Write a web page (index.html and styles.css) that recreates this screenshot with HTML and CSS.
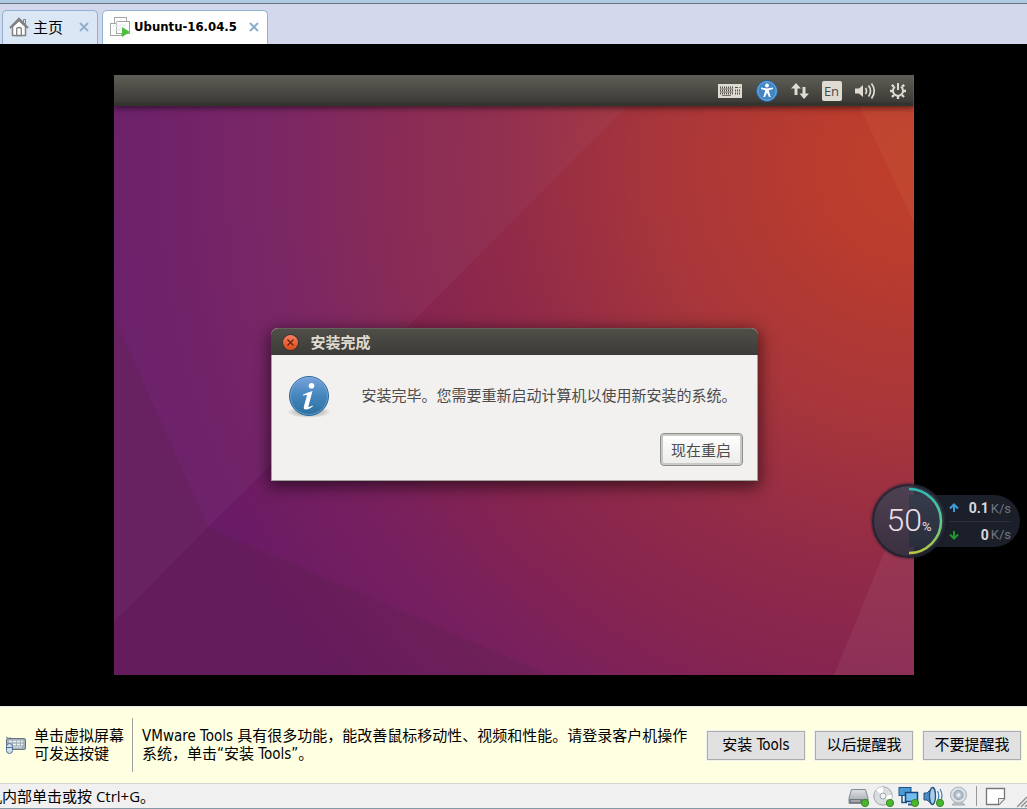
FILE: index.html
```html
<!DOCTYPE html>
<html lang="zh-CN">
<head>
<meta charset="utf-8">
<title>Ubuntu-16.04.5</title>
<link rel="stylesheet" href="styles.css">
</head>
<body>
<header class="tabs">
  <div class="tab tab-home">
    <svg class="tab-icon" width="20" height="20" viewBox="0 0 20 20" fill="#fff" stroke="#808080" stroke-width="1.5"><path d="M3.5 9.5V18.5H16.5V9.5L10 3.5Z"/><path d="M1 11L10 1.800L19 11" fill="none" stroke-width="2"/><path d="M14.500 5V2.500H16.500V7" fill="none" stroke-width="1"/><path d="M7.700 18.500V12Q7.700 10.500 10 10.500T12.300 12V18.500Z" stroke-width="1.300"/></svg>
    <span>主页</span>
    <button class="tab-close" type="button" aria-label="关闭主页"><svg width="10" height="10" viewBox="0 0 10 10" stroke="#8fb0cd" stroke-width="2"><path d="M1 1L9 9M9 1L1 9"/></svg></button>
  </div>
  <div class="tab tab-active">
    <svg class="tab-icon" width="22" height="22" viewBox="0 0 22 22"><g fill="#fff" stroke="#a5a5a5"><rect x="5.500" y="1.500" width="12" height="11"/><rect x="1.500" y="7.500" width="11" height="12"/><rect x="7.500" y="5.500" width="13" height="12"/></g><path d="M4 10H10M5.500 14H11M8 4V12M11 9H17M11 9V15" stroke="#e1e7ee" fill="none"/><path d="M13 11V21L21 16Z" fill="#4dbd3c"/></svg>
    <strong>Ubuntu-16.04.5</strong>
    <button class="tab-close" type="button" aria-label="关闭 Ubuntu-16.04.5"><svg width="10" height="10" viewBox="0 0 10 10" stroke="#8fb0cd" stroke-width="2"><path d="M1 1L9 9M9 1L1 9"/></svg></button>
  </div>
</header>

<main class="stage">
  <section class="guest">
    <svg class="wallpaper" viewBox="0 0 800 600" preserveAspectRatio="none" aria-hidden="true">
      <defs>
        <radialGradient id="sky" gradientUnits="userSpaceOnUse" cx="800" cy="90" r="820">
          <stop offset="0" stop-color="#bf3f2a"/>
          <stop offset=".12" stop-color="#b93c2e"/>
          <stop offset=".31" stop-color="#a8363a"/>
          <stop offset=".49" stop-color="#922b48"/>
          <stop offset=".64" stop-color="#852450"/>
          <stop offset=".77" stop-color="#78205e"/>
          <stop offset=".94" stop-color="#6a1b65"/>
          <stop offset="1" stop-color="#681b66"/>
        </radialGradient>
      </defs>
      <rect width="800" height="600" fill="url(#sky)"/>
      <path d="M0 0H544L0 547Z" fill="#c0b0d0" fill-opacity=".05"/>
      <path d="M0 242L94 452L0 547Z" fill="#5c2040" fill-opacity=".22"/>
      <path d="M94 452L434 600H0V547Z" fill="#5c2048" fill-opacity=".3"/>
      <path d="M731 0H800V148Z" fill="#e8a060" fill-opacity=".09"/>
      <path d="M720 600L800 405V600Z" fill="#fff" fill-opacity=".055"/>
    </svg>
    <div class="panel">
      <svg width="26" height="16" viewBox="0 0 26 16"><rect x="1" y="1" width="24" height="14" fill="#dfdbd2"/><path d="M3 4.500H16M3 7.500H16M3 10.500H16M18 7.500H24M18 10.500H24" stroke="#55544e" stroke-width="2" stroke-dasharray="1 1"/><path d="M3 6H16M3 9H16M5 12.500H14" stroke="#77756d"/><path d="M18 4.500H21" stroke="#55544e"/><path d="M22 4.500H24" stroke="#69b055"/></svg>
      <svg width="22" height="22" viewBox="0 0 22 22"><circle cx="11" cy="11" r="10.500" fill="#4386c4" stroke="#246196"/><circle cx="11" cy="11" r="9.300" fill="none" stroke="#77abdb"/><circle cx="11" cy="5.500" r="1.900" fill="#fff"/><path d="M5 7.500L11 8.500L17 7.500V9L12.700 10.300L14.700 17H13L11 12.800L9 17H7.300L9.300 10.300L5 9Z" fill="#fff"/></svg>
      <svg width="18" height="18" viewBox="0 0 18 18" fill="#dfdbd2"><path d="M5 1L10 6.500H6.500V13H3.500V6.500H0Z"/><path d="M13 17L8.500 11.500H11.500V5H14.500V11.500H18Z"/></svg>
      <span class="lang">En</span>
      <svg width="21" height="18" viewBox="0 0 21 18"><path d="M0 6.500H4L8 3V15L4 11.500H0Z" fill="#dfdbd2"/><path d="M10.500 6Q12.500 9 10.500 12M13.500 3.500Q17.500 9 13.500 14.500M16.500 1.500Q22 9 16.500 16.500" fill="none" stroke="#dfdbd2" stroke-width="1.700"/></svg>
      <svg width="18" height="18" viewBox="0 0 18 18" fill="none" stroke="#dfdbd2"><path d="M6 4.800A5 5 0 1 0 12 4.800" stroke-width="2"/><path d="M9 1V8" stroke-width="2"/><path d="M4.700 4.700L2.800 2.800M13.300 4.700L15.200 2.800M4 9H1M14 9H17M5 13L3 15M13 13L15 15M9 14V17" stroke-width="2.400"/></svg>
    </div>
    <div class="desktop">
      <div class="dialog" role="dialog" aria-labelledby="dialog-title">
        <div class="dialog-bar">
          <button class="dialog-close" type="button" aria-label="关闭"><svg width="7" height="7" viewBox="0 0 7 7" stroke="#602510" stroke-width="1.300"><path d="M.5 .5L6.500 6.500M6.500 .5L.5 6.500"/></svg></button>
          <h1 id="dialog-title">安装完成</h1>
        </div>
        <div class="dialog-body">
          <svg class="info" width="44" height="44" viewBox="0 0 44 44">
            <defs><linearGradient id="blue" x1="0" y1="0" x2="0" y2="1"><stop offset="0" stop-color="#79a2dd"/><stop offset=".5" stop-color="#4585bd"/><stop offset="1" stop-color="#2a709e"/></linearGradient><radialGradient id="shade"><stop offset=".6" stop-color="#000" stop-opacity=".18"/><stop offset="1" stop-color="#000" stop-opacity="0"/></radialGradient></defs>
            <ellipse cx="22" cy="37" rx="22" ry="6" fill="url(#shade)"/>
            <circle cx="22" cy="21" r="19.500" fill="url(#blue)" stroke="#28699c"/>
            <circle cx="22" cy="21" r="18.500" fill="none" stroke="#91b8e3" stroke-opacity=".5"/>
            <circle cx="24.500" cy="10.800" r="2.800" fill="#fff"/>
            <path d="M16 19.500Q20 17.500 25.500 16L21.500 31Q21 33 25.500 30.500L25.800 31.500Q22 34.500 19 34.500Q16 34.500 17 31L20 20.500Q20 19.500 16 20.500Z" fill="#fff"/>
          </svg>
          <p>安装完毕。您需要重新启动计算机以使用新安装的系统。</p>
        </div>
        <div class="dialog-actions"><button class="restart" type="button">现在重启</button></div>
      </div>
    </div>
  </section>

  <aside class="meter">
    <div class="gauge">
      <svg class="ring" width="74" height="74" viewBox="0 0 74 74" aria-hidden="true"><defs><linearGradient id="arc" x1="0" y1="0" x2="0" y2="1"><stop offset="0" stop-color="#2dbdb4"/><stop offset=".5" stop-color="#5cc98c"/><stop offset="1" stop-color="#bcc83e"/></linearGradient></defs><path d="M37 5A32 32 0 0 1 37 69" fill="none" stroke="url(#arc)" stroke-width="2.500"/></svg>
      <span class="gauge-value">50</span><span class="gauge-unit">%</span>
    </div>
    <div class="rates">
      <div class="rate"><svg width="10" height="10" viewBox="0 0 10 10" fill="none" stroke="#3a9cdb" stroke-width="2"><path d="M5 9V2M1 5.500L5 1.500L9 5.500"/></svg><b>0.1</b><span>K/s</span></div>
      <div class="rate"><svg width="10" height="10" viewBox="0 0 10 10" fill="none" stroke="#20962e" stroke-width="2"><path d="M5 1V8M1 4.500L5 8.500L9 4.500"/></svg><b>0</b><span>K/s</span></div>
    </div>
  </aside>
</main>

<section class="notice">
  <div class="hint">
    <svg width="22" height="20" viewBox="0 0 22 20"><path d="M1 2Q3 4 6 3" fill="none" stroke="#6c7984"/><rect x="1.500" y="3.500" width="19" height="11" rx="1.500" fill="#a4b0ba" stroke="#64737f"/><path d="M4 6.500H18M4 9.500H18" stroke="#eef2f5" stroke-width="1.500" stroke-dasharray="3 1"/><path d="M8 12H17" stroke="#dfe5ea"/><rect x="1.500" y="8.500" width="6" height="10" rx="3" fill="#cfe0ed" stroke="#51738e"/><path d="M2 12.500H7" stroke="#51738e"/></svg>
    <p>单击虚拟屏幕<br>可发送按键</p>
  </div>
  <p class="message">VMware Tools 具有很多功能，能改善鼠标移动性、视频和性能。请登录客户机操作系统，单击“安装 Tools”。</p>
  <div class="actions">
    <button type="button">安装 Tools</button>
    <button type="button">以后提醒我</button>
    <button type="button">不要提醒我</button>
  </div>
</section>

<footer class="status">
  <p>机内部单击或按 Ctrl+G。</p>
  <div class="devices">
    <svg width="21" height="21" viewBox="0 0 21 21"><defs><linearGradient id="disk" x1="0" y1="0" x2="0" y2="1"><stop offset="0" stop-color="#dfe2e5"/><stop offset="1" stop-color="#9aa1a8"/></linearGradient></defs><path d="M3.500 3.500H17.500L20 12V17.500H1V12Z" fill="url(#disk)" stroke="#838a91"/><path d="M1.500 13H20V17H1.500Z" fill="#70787f"/><path d="M3 15H12" stroke="#d2d7db"/><circle cx="17" cy="17" r="3.600" fill="#4ab62f" stroke="#338c20"/></svg>
    <svg width="21" height="21" viewBox="0 0 21 21"><circle cx="10" cy="10" r="9.200" fill="#d9dde0" stroke="#a0a6ab"/><path d="M10 10L3 4A9 9 0 0 1 10 1ZM10 10L17 15A9 9 0 0 0 19 9Z" fill="#fff"/><circle cx="10" cy="10" r="3" fill="#f3f3f3" stroke="#9fa6ac"/><circle cx="17" cy="17" r="3.600" fill="#4ab62f" stroke="#338c20"/></svg>
    <svg width="21" height="21" viewBox="0 0 21 21"><rect x="1" y="1.500" width="12" height="8" fill="#4c9ad4" stroke="#1c5484"/><path d="M4 9.500V16.500H9" fill="none" stroke="#1c5484" stroke-width="1.500"/><rect x="7.500" y="6.500" width="12" height="9" fill="#72bdf0" stroke="#14477a" stroke-width="1.500"/><path d="M10 18.500H17" stroke="#285f8e" stroke-width="2"/><circle cx="17" cy="17" r="3.600" fill="#4ab62f" stroke="#338c20"/></svg>
    <svg width="21" height="21" viewBox="0 0 21 21"><path d="M1 7H4L10 1Q12 10 10 19L4 14H1Z" fill="#4d8cc4" stroke="#23527c"/><ellipse cx="9.500" cy="10" rx="3" ry="8.500" fill="#a9cdea" stroke="#23527c" stroke-width="1.300"/><path d="M14.500 5Q17 10 14.500 15M17 3Q21 10 17 16" fill="none" stroke="#4d84b3" stroke-width="1.300"/><circle cx="17" cy="17" r="3.600" fill="#4ab62f" stroke="#338c20"/></svg>
    <svg width="21" height="21" viewBox="0 0 21 21"><path d="M4 19Q5 16 10 16T17 19Z" fill="#bec6cd" stroke="#a2aab1"/><circle cx="10.500" cy="9" r="8" fill="#d9dfe4" stroke="#a9b1b8"/><circle cx="10.500" cy="9" r="4.500" fill="#b4c1cc" stroke="#8fa0ae"/><circle cx="10.500" cy="9" r="2" fill="#e3ebf1"/></svg>
    <span class="divider"></span>
    <svg width="21" height="21" viewBox="0 0 21 21"><path d="M1.500 2.500H19.500V13L14 18.500H1.500Z" fill="#fff" stroke="#777" stroke-width="1.300"/><path d="M19.500 12.500H13.500V18.500" fill="#eee" stroke="#777"/></svg>
  </div>
  <svg class="grip" width="10" height="14" viewBox="0 0 10 14" stroke="#929292"><path d="M0 13L10 3M4 13L10 7M8 13L10 11" stroke-width="1.500"/></svg>
</footer>
</body>
</html>
```
FILE: styles.css
```css
* { box-sizing: border-box; }
body {
  margin: 0;
  min-height: 100vh;
  display: flex;
  flex-direction: column;
  overflow: hidden;
  background: #000;
  color: #000;
  font-family: "DejaVu Sans Condensed", "Noto Sans CJK SC", sans-serif;
  font-size: 15px;
}
p, h1 { margin: 0; }
svg { display: block; flex: none; }
button { font: inherit; color: inherit; }

.tabs {
  display: flex;
  gap: 4px;
  height: 44px;
  padding: 7px 2px 0;
  border-top: 3px solid #afcbe4;
  background: linear-gradient(#707078 1px, #d3d8ec 1px);
}
.tab {
  display: flex;
  align-items: center;
  padding: 0 8px 2px 6px;
  border: 1px solid #8fb2d2;
  border-bottom: 0;
  border-radius: 5px 5px 0 0;
  background: #dce7f5;
}
.tab span { margin-left: 4px; }
.tab strong { margin-left: 3px; font-family: "DejaVu Sans Condensed", sans-serif; font-size: 13px; }
.tab-active { background: #fff; }
.tab-close {
  display: grid;
  margin-left: 16px;
  padding: 0;
  border: 0;
  background: none;
}
.tab-active .tab-close { margin-left: 12px; }

.stage {
  position: relative;
  flex: 1;
  display: grid;
  place-items: center;
  padding: 31px 16px;
}
.guest {
  position: relative;
  display: flex;
  flex-direction: column;
  width: 100%;
  max-width: 800px;
  aspect-ratio: 4 / 3;
  isolation: isolate;
}
.wallpaper {
  position: absolute;
  inset: 0;
  z-index: -1;
  width: 100%;
  height: 100%;
}
.panel {
  display: flex;
  align-items: center;
  justify-content: flex-end;
  gap: 13px;
  height: 31px;
  padding-right: 7px;
  background: linear-gradient(#5f5e56, #3c3b37 27px, #34342e 28px);
  box-shadow: 0 2px 6px rgba(0, 0, 0, .55);
  clip-path: inset(0 0 -12px 0);
}
.lang {
  width: 20px;
  border-radius: 2px;
  background: #dfdbd2;
  color: #4b4a44;
  font: 13px/20px "Open Sans", sans-serif;
  text-align: center;
}
.desktop {
  flex: 1;
  display: grid;
  place-items: center;
  padding: 28px 0 0 1px;
}
.dialog {
  width: 487px;
  max-width: 100%;
  border-radius: 7px 7px 0 0;
  background: #f2f1f0;
  box-shadow: 0 4px 16px 2px rgba(0, 0, 0, .55);
  color: #4c4c4c;
  font-family: "Noto Sans CJK SC", sans-serif;
}
.dialog-bar {
  display: flex;
  align-items: center;
  gap: 13px;
  height: 27px;
  padding-left: 12px;
  border-top: 1px solid #65645c;
  border-radius: 7px 7px 0 0;
  background: linear-gradient(#4f4e48, #3c3b37);
}
.dialog-close {
  display: grid;
  place-items: center;
  width: 15px;
  height: 15px;
  padding: 0;
  border: 0;
  border-radius: 50%;
  background: linear-gradient(#f58060, #df4b1b);
  box-shadow: 0 0 0 1px #393631;
}
.dialog-bar h1 {
  color: #dfdbd2;
  font-size: 15px;
  line-height: 20px;
}
.dialog-body {
  display: flex;
  align-items: flex-start;
  gap: 31px;
  padding: 20px 15px 0;
  border: solid #a2a29c;
  border-width: 0 1px;
}
.dialog-body p { line-height: 40px; white-space: nowrap; }
.dialog-actions {
  display: flex;
  justify-content: flex-end;
  padding: 14px;
  border: solid #a2a29c;
  border-width: 0 1px 1px;
}
.restart {
  min-width: 83px;
  height: 33px;
  padding: 0 8px;
  border: 1px solid #8f8f8a;
  border-radius: 4px;
  background: linear-gradient(#fff, #ececeb);
  box-shadow: inset 0 0 0 2px #c8c8c5;
}

.meter {
  position: absolute;
  right: 7px;
  bottom: 148px;
  display: flex;
  align-items: center;
  font-family: Roboto, sans-serif;
}
.gauge {
  position: relative;
  z-index: 1;
  display: flex;
  align-items: baseline;
  justify-content: center;
  width: 74px;
  height: 74px;
  border-radius: 50%;
  background: linear-gradient(rgba(62, 68, 86, .84), rgba(40, 46, 60, .84));
  box-shadow: inset 0 0 0 2px rgba(25, 28, 42, .7), 0 0 3px #171824;
  color: #e8dfe6;
}
.ring { position: absolute; inset: 0; }
.gauge-value { font-size: 32px; font-weight: 300; line-height: 72px; }
.gauge-unit { font-size: 13px; }
.rates {
  width: 111px;
  margin-left: -37px;
  padding: 0 9px 0 40px;
  border-radius: 0 26px 26px 0;
  background: #1b1f29;
}
.rate {
  display: flex;
  align-items: center;
  height: 26px;
  color: #d9d9dc;
}
.rate + .rate { border-top: 1px solid #2b2f3a; }
.rate b { margin-left: auto; font-size: 14px; font-weight: 700; }
.rate span { margin-left: 2px; color: #71757e; font-size: 13px; }

.notice {
  display: flex;
  align-items: center;
  height: 77px;
  padding: 0 6px 0 5px;
  border-top: 1px solid #eaeaf0;
  background: #ffffe1;
  line-height: 18px;
}
.hint {
  display: flex;
  align-items: center;
  gap: 7px;
  height: 54px;
  padding-right: 8px;
  border-right: 1px solid #a0a0a0;
  white-space: nowrap;
}
.message { flex: 1; padding: 0 9px; }
.actions { display: flex; gap: 10px; }
.actions button {
  width: 98px;
  height: 29px;
  padding: 0;
  border: 1px solid #adadad;
  outline: 1px solid #f0f0ec;
  background: #e1e1e1;
  white-space: nowrap;
}

.status {
  display: flex;
  align-items: center;
  height: 26px;
  border-top: 1px solid #d4d4d4;
  border-bottom: 1px solid #839ba4;
  background: #f0f0f0;
  font-family: "Open Sans", "Noto Sans CJK SC", sans-serif;
  line-height: 22px;
  overflow: hidden;
}
.status p { flex: 1; text-indent: -13px; }
.devices { display: flex; align-items: center; gap: 4px; }
.divider { width: 1px; height: 20px; margin: 0 4px 0 3px; background: #999; }
.grip { align-self: flex-end; margin-left: 11px; }
```
